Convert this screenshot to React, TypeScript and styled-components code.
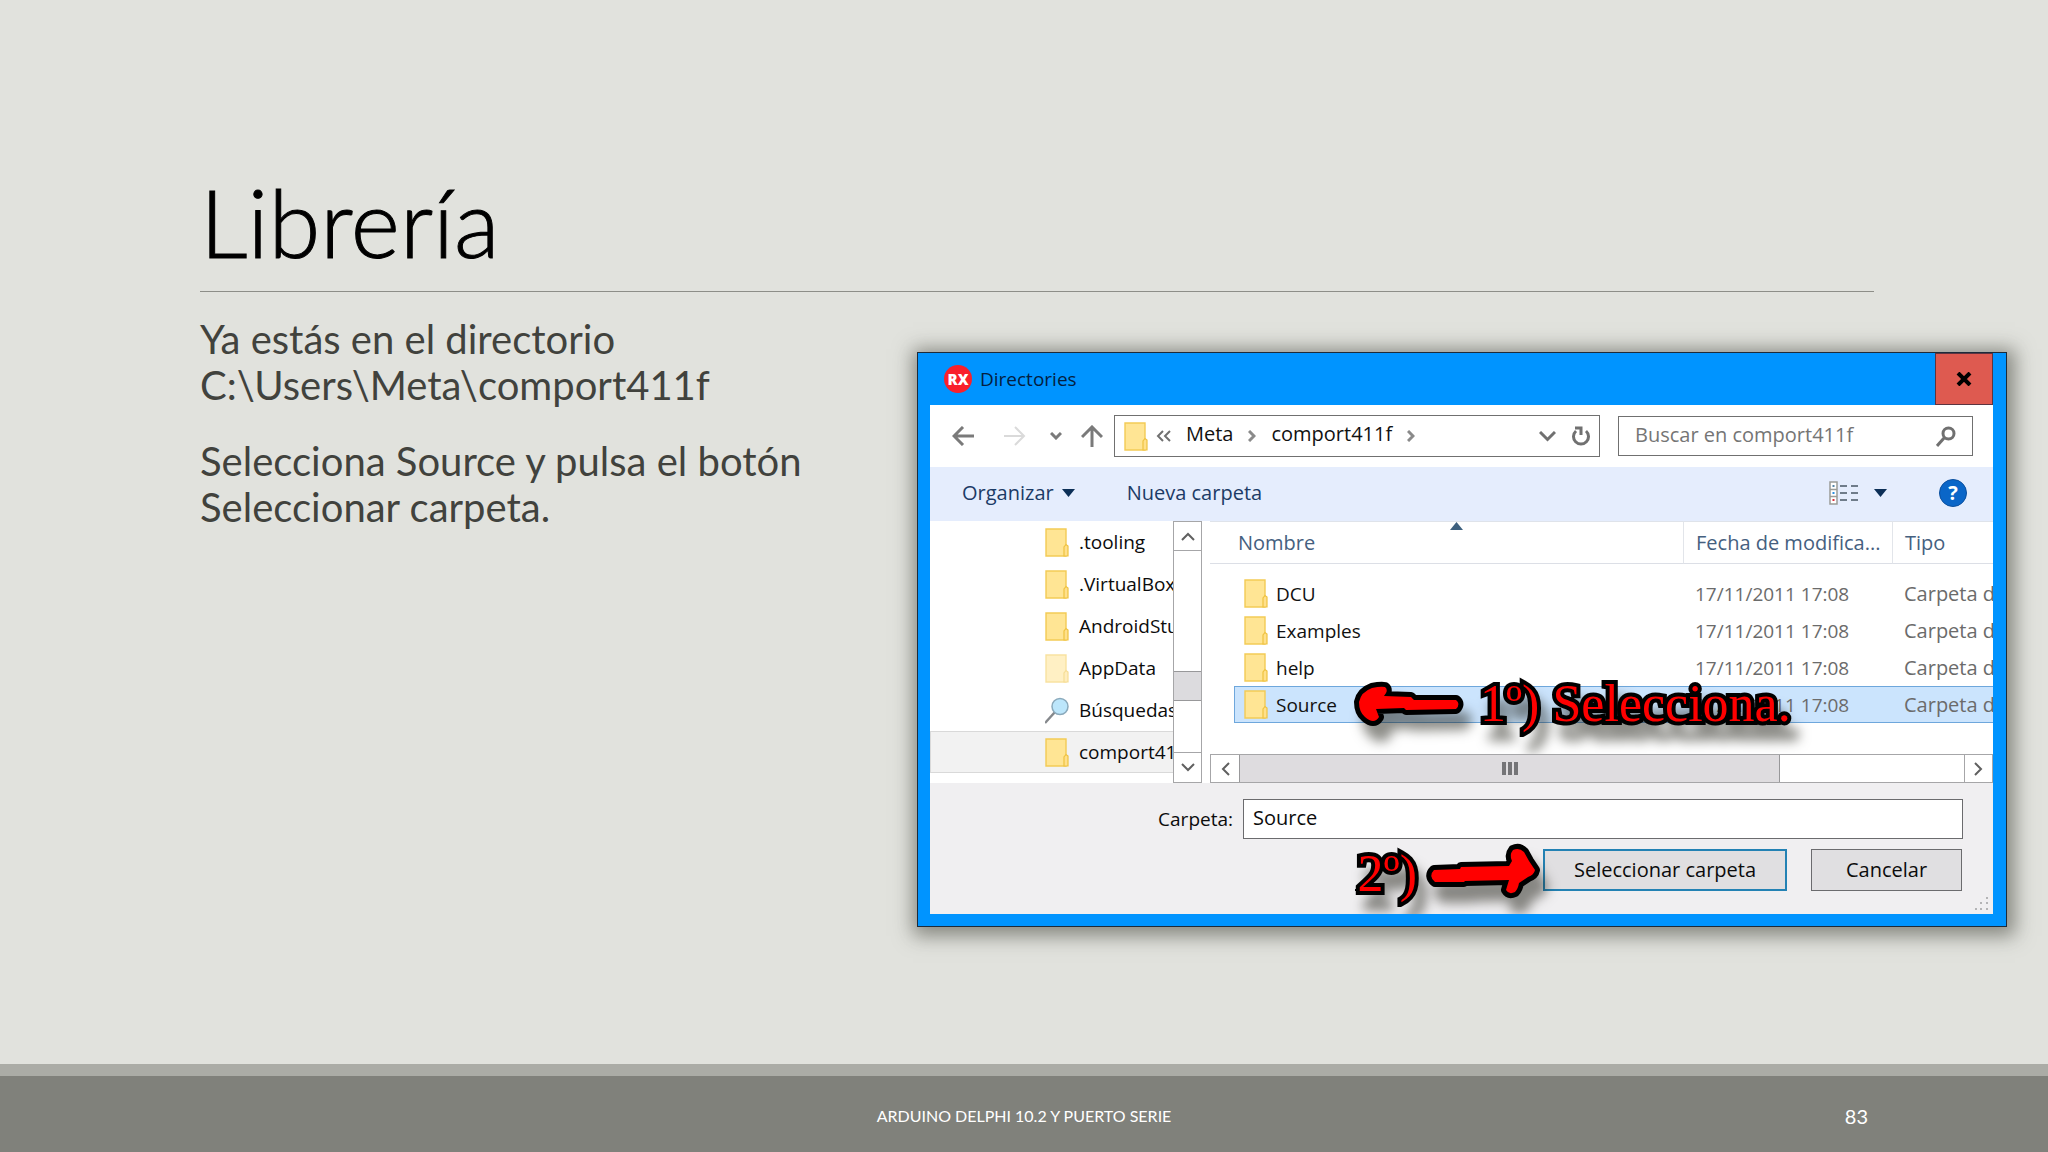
import React from "react";
import styled, { createGlobalStyle, css } from "styled-components";

const ui = '"Open Sans", "Noto Sans", sans-serif';
const slideFont = 'Lato, "Open Sans", sans-serif';

const GlobalStyle = createGlobalStyle`
  *, *::before, *::after { box-sizing: border-box; }
  body { margin: 0; background: #e1e2dd; font-family: ${slideFont}; }
  button, input { font: inherit; color: inherit; }
  button { padding: 0; border: 0; background: none; }
  svg { display: block; flex: none; }
`;

/* ---------- Slide ---------- */

const Slide = styled.div`
  display: flex;
  flex-direction: column;
  min-height: 100vh;
  background: #e1e2dd;
`;

const SlideHeader = styled.header`
  margin: 0 174px 0 200px;
  padding: 166px 0 14px;
  border-bottom: 1px solid #8d8e88;
`;

const Title = styled.h1`
  margin: 0;
  font-size: 94px;
  font-weight: 300;
  line-height: 111px;
  color: #000;
  -webkit-text-stroke: 1px #000;
`;

const SlideBody = styled.main`
  flex: 1;
  display: flex;
  align-items: flex-start;
  padding: 24px 41px 60px 200px;
`;

const Copy = styled.div`
  flex: 0 0 717px;
  padding-right: 80px;
  font-size: 40px;
  line-height: 46px;
  color: #41423d;
  p { margin: 0 0 30px; }
`;

const SlideFooter = styled.footer`
  display: grid;
  grid-template-columns: 1fr auto 1fr;
  align-items: center;
  height: 88px;
  padding: 4px 180px 0;
  border-top: 12px solid #abaca6;
  background: #80817b;
  color: #fff;
  font-size: 16px;
  line-height: 24px;
`;

const PageNumber = styled.span`
  grid-column: 3;
  justify-self: end;
  font-size: 20px;
`;

const FooterText = styled.span`
  grid-column: 2;
`;

/* ---------- Dialog ---------- */

const Dialog = styled.section`
  flex: 1;
  min-width: 0;
  margin-top: 36px;
  border: 1px solid #1d2b3a;
  padding: 0 13px 12px 12px;
  background: #0094ff;
  box-shadow: 2px 3px 18px 6px rgba(60, 62, 52, 0.55);
  font-family: ${ui};
  font-size: 20px;
  line-height: 28px;
  color: #0c0c0c;
`;

const TitleBar = styled.div`
  display: flex;
  align-items: center;
  gap: 8px;
  height: 52px;
  padding-left: 14px;
`;

const DialogTitle = styled.h2`
  flex: 1;
  margin: 0;
  font-size: 19px;
  font-weight: 400;
  color: #04203f;
`;

const CloseButton = styled.button`
  display: grid;
  place-items: center;
  align-self: stretch;
  width: 58px;
  border: 1px solid #5d3440;
  background: #de5a50;
`;

const DialogContent = styled.div`
  overflow: hidden;
  background: #fff;
`;

const NavRow = styled.div`
  display: flex;
  align-items: center;
  height: 62px;
  padding: 0 20px 0 22px;
`;

const NavButtons = styled.div`
  display: grid;
  grid-template-columns: 52px 46px 31px 33px;
  align-items: center;
  button { display: grid; justify-items: start; }
`;

const AddressBar = styled.nav`
  flex: 1;
  display: flex;
  align-items: center;
  height: 42px;
  padding: 0 8px 0 9px;
  border: 1px solid #707070;
`;

const Overflow = styled.button`
  margin-left: 8px;
`;

const Crumb = styled.a`
  margin: 0 15px;
  padding-bottom: 4px;
  color: #111;
  text-decoration: none;
`;

const AddressTools = styled.div`
  display: flex;
  align-items: center;
  gap: 16px;
  margin-left: auto;
`;

const SearchBox = styled.label`
  flex: 0 0 355px;
  display: flex;
  align-items: center;
  height: 40px;
  margin-left: 18px;
  padding: 0 16px;
  border: 1px solid #707070;
  input {
    flex: 1;
    min-width: 0;
    padding: 0 0 2px;
    border: 0;
    outline: 0;
    background: none;
  }
  input::placeholder { color: #757575; opacity: 1; }
`;

const Toolbar = styled.div`
  display: flex;
  align-items: center;
  height: 54px;
  padding: 0 26px 2px 32px;
  background: #e5edfd;
  color: #1c3b66;
`;

const ToolButton = styled.button<{ $gap: number }>`
  display: flex;
  align-items: center;
  gap: ${(p) => p.$gap}px;
`;

const ToolGroup = styled.div<{ $end?: boolean }>`
  display: flex;
  align-items: center;
  gap: 52px;
  margin-left: ${(p) => (p.$end ? "auto" : 0)};
`;

const Panes = styled.div`
  display: flex;
  height: 262px;
`;

const TreePane = styled.ul`
  flex: 0 0 243px;
  margin: 0;
  padding: 0;
  overflow: hidden;
  list-style: none;
  font-size: 19px;
`;

const TreeItem = styled.li<{ $selected?: boolean }>`
  display: grid;
  grid-template-columns: 26px 1fr;
  align-items: center;
  column-gap: 8px;
  height: 42px;
  padding-left: 114px;
  border: 1px solid transparent;
  white-space: nowrap;
  ${(p) => p.$selected && css`
    border-color: #d9d9d9;
    border-right: 0;
    background: #f2f2f2;
  `}
`;

const VScroll = styled.div`
  flex: 0 0 29px;
  display: grid;
  grid-template-rows: 29px 120px 30px 1fr 30px;
  border: 1px solid #a6a6a8;
  button { display: grid; place-items: center; }
  button:first-child { border-bottom: 1px solid #a6a6a8; }
  button:last-child { border-top: 1px solid #a6a6a8; }
`;

const VThumb = styled.div`
  grid-row: 3;
  border: solid #98989a;
  border-width: 1px 0;
  background: #dcdbde;
`;

const DownButton = styled.button`
  grid-row: 5;
`;

const FilePane = styled.div`
  flex: 1;
  min-width: 0;
  display: flex;
  flex-direction: column;
  margin-left: 8px;
`;

const ListArea = styled.div`
  flex: 1;
  position: relative;
  overflow: hidden;
`;

const FileTable = styled.table`
  width: 100%;
  table-layout: fixed;
  border-collapse: separate;
  border-spacing: 0;
  th, td {
    padding: 0 0 0 12px;
    text-align: left;
    font-weight: 400;
    white-space: nowrap;
  }
  th {
    height: 43px;
    border-top: 1px solid #dfe3ea;
    border-bottom: 1px solid #dcdfe6;
    border-left: 1px solid #e2e5ea;
    color: #45607f;
  }
  th:first-child {
    padding-left: 28px;
    border-left: 0;
  }
  tbody::before { content: ""; display: block; height: 11px; }
  td {
    height: 37px;
    overflow: hidden;
    color: #6b6b6b;
  }
`;

const Col = styled.col<{ $width?: number }>`
  width: ${(p) => (p.$width ? `${p.$width}px` : "auto")};
`;

const DateCell = styled.td`
  font-size: 19px;
`;

const FileRow = styled.tr<{ $selected?: boolean }>`
  ${(p) => p.$selected && css`
    td {
      border: solid #6ea7dc;
      border-width: 1px 0;
      background: #cbe4fd;
    }
  `}
  && td:first-child {
    position: relative;
    z-index: 1;
    padding-left: 24px;
    overflow: visible;
    color: #111;
    background: none;
    border: 0;
  }
`;

const FileName = styled.div<{ $selected?: boolean }>`
  display: flex;
  align-items: center;
  gap: 8px;
  height: 37px;
  padding-left: 9px;
  border: 1px solid transparent;
  font-size: 19px;
  ${(p) => p.$selected && css`
    border-color: #6ea7dc;
    border-right: 0;
    background: #cbe4fd;
  `}
`;

const SortMark = styled.span`
  position: absolute;
  top: 1px;
  left: 240px;
`;

const HScroll = styled.div`
  display: grid;
  grid-template-columns: 28px 542fr 184fr 28px;
  height: 29px;
  border: 1px solid #a6a6a8;
  button { display: grid; place-items: center; }
  button:last-child { border-left: 1px solid #a6a6a8; }
`;

const HThumb = styled.div`
  display: flex;
  justify-content: center;
  align-items: center;
  gap: 2px;
  border: solid #98989a;
  border-width: 0 1px;
  background: #dedcdf;
  span { width: 4px; height: 13px; background: #747477; }
`;

const Bottom = styled.div`
  position: relative;
  height: 131px;
  padding: 16px 30px 0 0;
  background: #f0eff1;
`;

const FieldRow = styled.div`
  display: grid;
  grid-template-columns: 303px 1fr;
  column-gap: 10px;
  align-items: center;
  label { text-align: right; font-size: 19px; }
  input {
    height: 40px;
    padding: 0 9px 4px;
    border: 1px solid #6b6b6e;
    outline: 0;
    background: #fff;
  }
`;

const Actions = styled.div`
  position: relative;
  display: flex;
  justify-content: flex-end;
  gap: 24px;
  width: max-content;
  margin: 10px 1px 0 auto;
`;

const ActionButton = styled.button<{ $primary?: boolean }>`
  width: ${(p) => (p.$primary ? 244 : 151)}px;
  height: 42px;
  border: ${(p) => (p.$primary ? "2px solid #2382b4" : "1px solid #6b6b6e")};
  background: #e0dfe1;
`;

const Grip = styled.span`
  position: absolute;
  right: 4px;
  bottom: 3px;
`;

/* ---------- Red call-outs ---------- */

const Callout = styled.div<{ $side: "row" | "button" }>`
  position: absolute;
  display: flex;
  align-items: center;
  filter: drop-shadow(8px 16px 6px rgba(30, 30, 20, 0.5));
  ${(p) => p.$side === "row"
    ? css`left: 144px; top: -4px; gap: 16px; height: 44px;`
    : css`right: calc(100% + 4px); top: -5px; gap: 10px; height: 54px;`}
`;

const CalloutText = styled.strong<{ $low?: boolean }>`
  padding-top: ${(p) => (p.$low ? 6 : 0)}px;
  font-family: "Liberation Serif", "Times New Roman", serif;
  font-size: 52px;
  font-weight: 400;
  line-height: 56px;
  color: #f00;
  white-space: nowrap;
  -webkit-text-stroke: 8px #000;
  paint-order: stroke fill;
  stroke-linejoin: round;
`;

/* ---------- Icons ---------- */

const Folder = ({ faded = false }: { faded?: boolean }) => (
  <svg width="24" height="29" viewBox="0 0 24 29" opacity={faded ? 0.55 : 1} aria-hidden="true">
    <path d="M1 1h20v27H1z" fill="#ffe594" stroke="#f3cb55" strokeWidth="1.4" />
    <path d="M19 28v-9l2-2.500 2 1.500v10z" fill="#ffe08a" stroke="#efc240" strokeWidth="1.200" />
  </svg>
);

const SearchFolder = () => (
  <svg width="26" height="27" viewBox="0 0 26 27" aria-hidden="true">
    <path d="M0 26 10 15" stroke="#85888c" strokeWidth="2.500" />
    <circle cx="15" cy="9.500" r="8" fill="#bce6fb" stroke="#8aa9bb" strokeWidth="1.500" />
  </svg>
);

type StrokeProps = { w: number; h: number; d: string; color?: string; sw?: number };
const Stroke = ({ w, h, d, color = "#707070", sw = 3 }: StrokeProps) => (
  <svg width={w} height={h} viewBox={`0 0 ${w} ${h}`} fill="none" stroke={color} strokeWidth={sw} aria-hidden="true">
    <path d={d} />
  </svg>
);

const Caret = ({ up = false }: { up?: boolean }) => (
  <svg width="13" height="8" viewBox="0 0 13 8" aria-hidden="true">
    <path d={up ? "M0 8h13L6.500 0z" : "M0 0h13L6.500 8z"} fill={up ? "#3d607e" : "#0c2f57"} />
  </svg>
);

const RxBadge = styled.span`
  display: grid;
  place-items: center;
  width: 28px;
  height: 28px;
  border-radius: 50%;
  background: #f9202b;
  color: #fff;
  font-size: 15px;
  font-weight: 800;
  line-height: 28px;
`;

const HelpButton = styled.button`
  width: 28px;
  height: 28px;
  border: 1px solid #0a4f9e;
  border-radius: 50%;
  background: #0a66c8;
  color: #fff;
  font-size: 20px;
  font-weight: 700;
  line-height: 26px;
`;

const ViewIcon = () => (
  <svg width="29" height="24" viewBox="0 0 29 24" aria-hidden="true">
    <path d="M1 1h7v22H1zM1 8.500h7M1 15.500h7" fill="#fff" stroke="#9b9c98" strokeWidth="1.500" />
    <path d="M3.500 4h2v2h-2z" fill="#5584a8" />
    <path d="M3.500 11h2v2h-2z" fill="#2d8fe0" />
    <path d="M3.500 18h2v2h-2z" fill="#d8303c" />
    <path d="M11 5h7M22 5h7M11 12h7M22 12h7M11 19h7M22 19h7" stroke="#6f7c8a" strokeWidth="2" />
  </svg>
);

const ArrowLeft = () => (
  <svg width="110" height="44" viewBox="0 0 110 44" overflow="visible" aria-hidden="true">
    <path
      d="M5 20Q7 10 18 6Q27 4 31 5Q35 8 30 14L57 15L60 18L102 18Q107 22 102 27L52 28L50 26L22 27L25 35Q20 43 11 35Q5 30 5 20Z"
      fill="#f00" stroke="#000" strokeWidth="10" strokeLinejoin="round" paintOrder="stroke"
    />
  </svg>
);

const ArrowRight = () => (
  <svg width="112" height="54" viewBox="0 0 112 54" overflow="visible" aria-hidden="true">
    <path
      d="M7 26L33 25L34 23L82 22L85 17Q82 11 86 6Q92 3 97 8L102 17L108 26Q107 31 101 33L92 39Q91 45 88 48Q82 51 79 46L82 36L38 37L37 38L8 38Q1 32 7 26Z"
      fill="#f00" stroke="#000" strokeWidth="10" strokeLinejoin="round" paintOrder="stroke"
    />
  </svg>
);

/* ---------- Data ---------- */

const tree = [
  { name: ".tooling" },
  { name: ".VirtualBox" },
  { name: "AndroidStudio" },
  { name: "AppData", faded: true },
  { name: "Búsquedas", search: true },
  { name: "comport411f", selected: true },
];

const files = ["DCU", "Examples", "help", "Source"];

export default function App() {
  return (
    <Slide>
      <GlobalStyle />
      <SlideHeader>
        <Title>Librería</Title>
      </SlideHeader>
      <SlideBody>
        <Copy>
          <p>Ya estás en el directorio C:\Users\Meta\comport411f</p>
          <p>Selecciona Source y pulsa el botón Seleccionar carpeta.</p>
        </Copy>
        <Dialog aria-label="Directories">
          <TitleBar>
            <RxBadge>RX</RxBadge>
            <DialogTitle>Directories</DialogTitle>
            <CloseButton aria-label="Cerrar">
              <Stroke w={16} h={14} d="M2 1 14 13M14 1 2 13" color="#000" sw={4} />
            </CloseButton>
          </TitleBar>
          <DialogContent>
            <NavRow>
              <NavButtons>
                <button aria-label="Atrás"><Stroke w={22} h={20} d="M22 10H2M11 1 2 10l9 9" color="#7a7a7a" /></button>
                <button aria-label="Adelante"><Stroke w={22} h={20} d="M0 10h20M11 1l9 9-9 9" color="#dadada" sw={2} /></button>
                <button aria-label="Recientes"><Stroke w={12} h={8} d="M1 1l5 5 5-5" color="#7a7a7a" /></button>
                <button aria-label="Subir"><Stroke w={22} h={22} d="M11 22V2M1 12 11 2l10 10" color="#7a7a7a" /></button>
              </NavButtons>
              <AddressBar>
                <Folder />
                <Overflow aria-label="Más carpetas">
                  <Stroke w={15} h={12} d="M7 1 2 6l5 5M14 1 9 6l5 5" sw={2} />
                </Overflow>
                <Crumb href="#meta">Meta</Crumb>
                <Stroke w={8} h={12} d="M1 1l5 5-5 5" color="#8a8a8a" />
                <Crumb href="#comport411f">comport411f</Crumb>
                <Stroke w={8} h={12} d="M1 1l5 5-5 5" color="#8a8a8a" />
                <AddressTools>
                  <button aria-label="Anteriores"><Stroke w={17} h={11} d="M1 1l7.500 7.500L16 1" /></button>
                  <button aria-label="Actualizar"><Stroke w={19} h={20} d="M4 5A7.500 7.500 0 1 0 14 5M3 2h6v7" /></button>
                </AddressTools>
              </AddressBar>
              <SearchBox>
                <input type="text" aria-label="Buscar" placeholder="Buscar en comport411f" />
                <svg width="20" height="21" viewBox="0 0 20 21" fill="none" stroke="#707070" strokeWidth="3" aria-hidden="true">
                  <circle cx="12.500" cy="7.500" r="5.500" />
                  <path d="M8.500 11.500 1 20" />
                </svg>
              </SearchBox>
            </NavRow>
            <Toolbar>
              <ToolGroup>
                <ToolButton $gap={8}>Organizar <Caret /></ToolButton>
                <ToolButton $gap={0}>Nueva carpeta</ToolButton>
              </ToolGroup>
              <ToolGroup $end>
                <ToolButton $gap={16} aria-label="Vista"><ViewIcon /><Caret /></ToolButton>
                <HelpButton aria-label="Ayuda">?</HelpButton>
              </ToolGroup>
            </Toolbar>
            <Panes>
              <TreePane>
                {tree.map((t) => (
                  <TreeItem key={t.name} $selected={t.selected}>
                    {t.search ? <SearchFolder /> : <Folder faded={t.faded} />}
                    <span>{t.name}</span>
                  </TreeItem>
                ))}
              </TreePane>
              <VScroll>
                <button aria-label="Desplazar arriba"><Stroke w={14} h={9} d="M1 8l6-6 6 6" color="#606060" sw={2} /></button>
                <VThumb />
                <DownButton aria-label="Desplazar abajo"><Stroke w={14} h={9} d="M1 1l6 6 6-6" color="#606060" sw={2} /></DownButton>
              </VScroll>
              <FilePane>
                <ListArea>
                  <FileTable>
                    <colgroup>
                      <Col />
                      <Col $width={209} />
                      <Col $width={101} />
                    </colgroup>
                    <thead>
                      <tr>
                        <th>Nombre<SortMark><Caret up /></SortMark></th>
                        <th>Fecha de modifica...</th>
                        <th>Tipo</th>
                      </tr>
                    </thead>
                    <tbody>
                      {files.map((name) => {
                        const selected = name === "Source";
                        return (
                          <FileRow key={name} $selected={selected}>
                            <td>
                              <FileName $selected={selected}><Folder />{name}</FileName>
                              {selected && (
                                <Callout $side="row">
                                  <ArrowLeft />
                                  <CalloutText>1º) Selecciona.</CalloutText>
                                </Callout>
                              )}
                            </td>
                            <DateCell>17/11/2011 17:08</DateCell>
                            <td>Carpeta de archivos</td>
                          </FileRow>
                        );
                      })}
                    </tbody>
                  </FileTable>
                </ListArea>
                <HScroll>
                  <button aria-label="Desplazar a la izquierda"><Stroke w={9} h={14} d="M8 1 2 7l6 6" color="#606060" sw={2} /></button>
                  <HThumb><span /><span /><span /></HThumb>
                  <div />
                  <button aria-label="Desplazar a la derecha"><Stroke w={9} h={14} d="M1 1l6 6-6 6" color="#606060" sw={2} /></button>
                </HScroll>
              </FilePane>
            </Panes>
            <Bottom>
              <FieldRow>
                <label htmlFor="folder">Carpeta:</label>
                <input id="folder" type="text" defaultValue="Source" />
              </FieldRow>
              <Actions>
                <Callout $side="button">
                  <CalloutText $low>2º)</CalloutText>
                  <ArrowRight />
                </Callout>
                <ActionButton $primary>Seleccionar carpeta</ActionButton>
                <ActionButton>Cancelar</ActionButton>
              </Actions>
              <Grip>
                <svg width="14" height="14" viewBox="0 0 14 14" fill="#b4b4b6" aria-hidden="true">
                  <path d="M11 0h2v2h-2zM11 5h2v2h-2zM11 11h2v2h-2zM5 5h2v2H5zM5 11h2v2H5zM0 11h2v2H0z" />
                </svg>
              </Grip>
            </Bottom>
          </DialogContent>
        </Dialog>
      </SlideBody>
      <SlideFooter>
        <FooterText>ARDUINO DELPHI 10.2 Y PUERTO SERIE</FooterText>
        <PageNumber>83</PageNumber>
      </SlideFooter>
    </Slide>
  );
}
